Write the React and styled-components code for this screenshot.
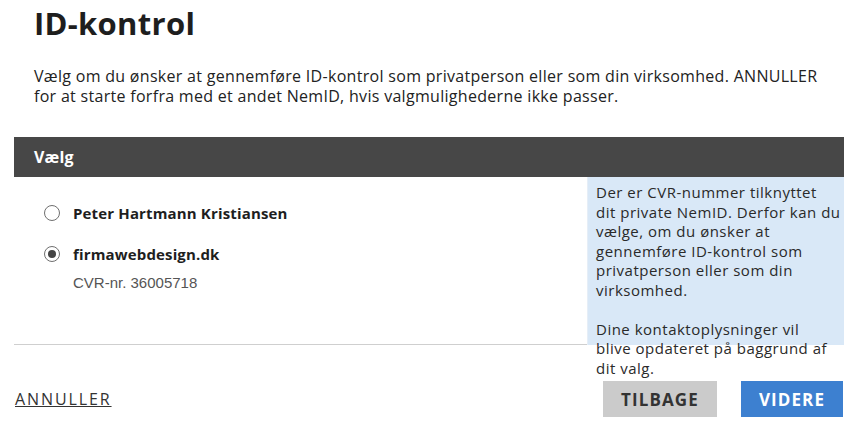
import React, { useState } from "react";
import styled, { createGlobalStyle } from "styled-components";

const GlobalStyle = createGlobalStyle`
  body {
    margin: 0;
    background: #ffffff;
    font-family: "Open Sans", "Lato", sans-serif;
    color: #222222;
  }
`;

const Page = styled.div`
  width: 862px;
  height: 436px;
  padding: 0 18px 0 14px;
  box-sizing: border-box;
  overflow: hidden;
`;

const Title = styled.h1`
  margin: 0;
  padding: 4px 0 0 20px;
  font-size: 31px;
  line-height: 38px;
  font-weight: 700;
  letter-spacing: 0.3px;
  color: #1e1e1e;
`;

const Intro = styled.p`
  margin: 24px 0 0 20px;
  width: 786px;
  font-size: 16px;
  line-height: 20px;
  letter-spacing: 0.3px;
  color: #222222;
`;

const Panel = styled.section`
  margin-top: 31px;
`;

const PanelHeader = styled.div`
  height: 40px;
  display: flex;
  align-items: center;
  padding-left: 20px;
  background: #474747;
  color: #ffffff;
  font-size: 16px;
  font-weight: 700;
  letter-spacing: 0.2px;
`;

const PanelBody = styled.div`
  display: flex;
  height: 168px;
`;

const Options = styled.div`
  flex: 1;
  padding: 27px 0 0 30px;
  border-bottom: 1px solid #cfcfcf;
  display: flex;
  flex-direction: column;
  gap: 23px;
`;

const Option = styled.label`
  display: flex;
  flex-direction: column;
  cursor: pointer;
`;

const OptionRow = styled.span`
  display: flex;
  align-items: center;
  gap: 13px;
  height: 18px;
`;

const Radio = styled.span`
  width: 16px;
  height: 16px;
  box-sizing: border-box;
  border-radius: 50%;
  border: 1px solid #6f6f6f;
  background: #ffffff;
  display: flex;
  align-items: center;
  justify-content: center;

  &::after {
    content: "";
    width: 8px;
    height: 8px;
    border-radius: 50%;
    background: ${(p) => (p.checked ? "#444444" : "transparent")};
  }
`;

const OptionName = styled.span`
  font-size: 15px;
  font-weight: 700;
  letter-spacing: 0.15px;
  color: #1e1e1e;
`;

const OptionMeta = styled.span`
  margin: 11px 0 0 29px;
  font-family: "Liberation Sans", Arial, sans-serif;
  font-size: 15px;
  color: #555555;
`;

const Info = styled.aside`
  width: 257px;
  flex-shrink: 0;
  box-sizing: border-box;
  padding: 6px 0 0 8px;
  background: #d9e8f7;
  border-left: 1px solid #e6eef7;
  font-size: 15px;
  line-height: 19.5px;
  letter-spacing: 0.5px;
  color: #2a2a2a;
  white-space: nowrap;

  p {
    margin: 0 0 19.5px;
  }
`;

const Footer = styled.div`
  display: flex;
  align-items: center;
  margin-top: 36px;
`;

const CancelLink = styled.a`
  margin-left: 1px;
  font-size: 16px;
  letter-spacing: 1.9px;
  color: #333333;
  text-decoration: underline;
  cursor: pointer;
`;

const Actions = styled.div`
  margin: 0 1px 0 auto;
  display: flex;
  gap: 24px;
`;

const Button = styled.button`
  height: 36px;
  padding: 0 18px;
  border: none;
  font-family: "Open Sans", "Lato", sans-serif;
  font-size: 17px;
  font-weight: 700;
  letter-spacing: 1.1px;
  background: ${(p) => (p.primary ? "#3d80d0" : "#cbcbcb")};
  color: ${(p) => (p.primary ? "#ffffff" : "#333333")};
  cursor: pointer;
`;

const choices = [
  { id: "person", name: "Peter Hartmann Kristiansen" },
  { id: "firma", name: "firmawebdesign.dk", meta: "CVR-nr. 36005718" },
];

export default function App() {
  const [selected, setSelected] = useState("firma");

  return (
    <Page>
      <GlobalStyle />
      <Title>ID-kontrol</Title>
      <Intro>
        Vælg om du ønsker at gennemføre ID-kontrol som privatperson eller som din
        virksomhed. ANNULLER for at starte forfra med et andet NemID, hvis
        valgmulighederne ikke passer.
      </Intro>
      <Panel>
        <PanelHeader>Vælg</PanelHeader>
        <PanelBody>
          <Options>
            {choices.map((c) => (
              <Option key={c.id} onClick={() => setSelected(c.id)}>
                <OptionRow>
                  <Radio checked={selected === c.id} />
                  <OptionName>{c.name}</OptionName>
                </OptionRow>
                {c.meta && <OptionMeta>{c.meta}</OptionMeta>}
              </Option>
            ))}
          </Options>
          <Info>
            <p>
              Der er CVR-nummer tilknyttet
              <br />
              dit private NemID. Derfor kan du
              <br />
              vælge, om du ønsker at
              <br />
              gennemføre ID-kontrol som
              <br />
              privatperson eller som din
              <br />
              virksomhed.
            </p>
            <p>
              Dine kontaktoplysninger vil
              <br />
              blive opdateret på baggrund af
              <br />
              dit valg.
            </p>
          </Info>
        </PanelBody>
      </Panel>
      <Footer>
        <CancelLink>ANNULLER</CancelLink>
        <Actions>
          <Button>TILBAGE</Button>
          <Button primary>VIDERE</Button>
        </Actions>
      </Footer>
    </Page>
  );
}
